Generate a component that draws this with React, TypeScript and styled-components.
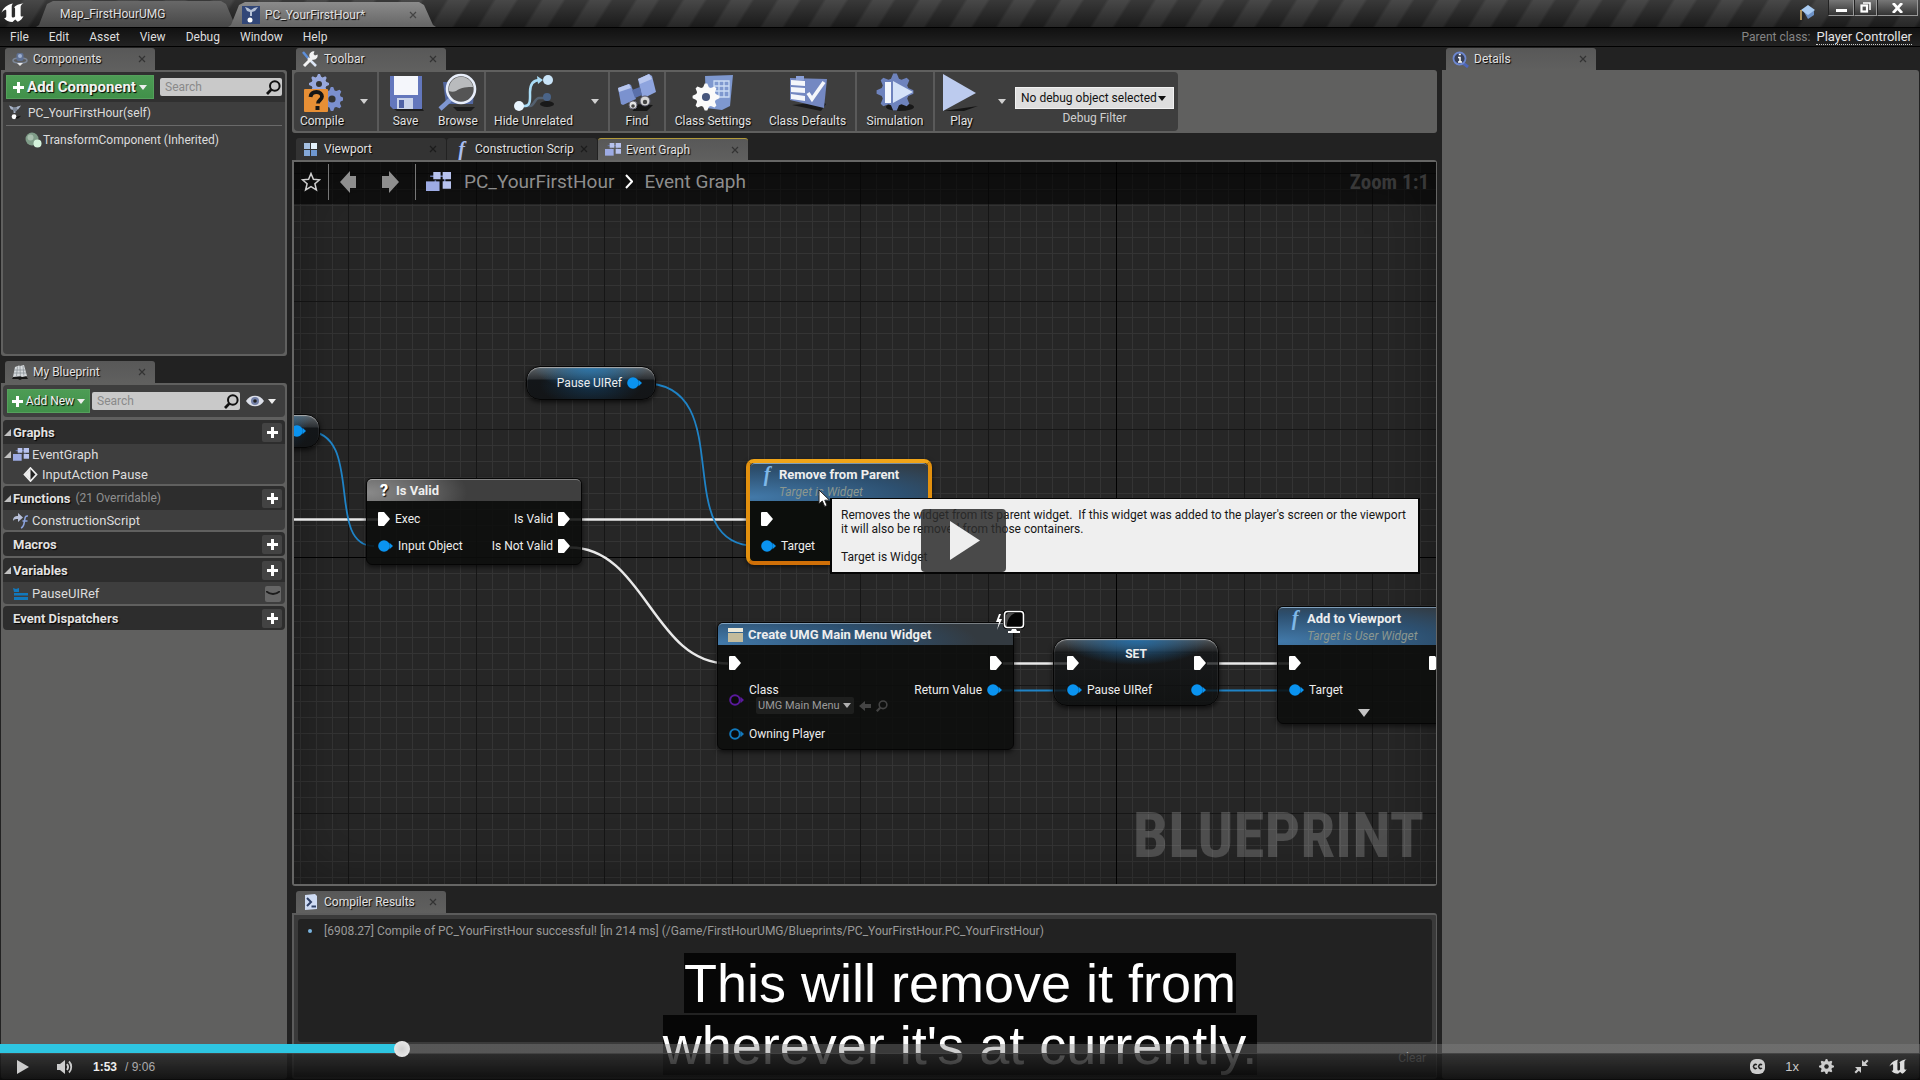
import React from "react";
import styled, { createGlobalStyle, css } from "styled-components";

const GlobalStyle = createGlobalStyle`
  *, *::before, *::after { box-sizing: border-box; }
  html, body, #root { height: 100%; }
  body { margin: 0; background: #000; font-family: Roboto, "Liberation Sans", sans-serif; font-size: 12px; color: #dcdcdc; }
  button, input, select { font: inherit; color: inherit; margin: 0; border: 0; padding: 0; background: none; }
  svg { display: block; flex: none; }
  ul { list-style: none; margin: 0; padding: 0; }
`;

const slate = "#60605f";
const dock = "#222222";
const panel = "#3e3e3e";
const textShadow = "1px 1px 1px #000";

/* ---------- page frame ---------- */
const Screen = styled.div`
  position: relative;
  display: flex;
  flex-direction: column;
  height: 100vh;
  overflow: hidden;
  background: ${dock};
`;

const TitleBar = styled.header`
  display: flex;
  height: 27px;
  flex: none;
  background:
    linear-gradient(180deg, rgba(70, 70, 70, 0.5), rgba(16, 16, 16, 0.6)),
    repeating-linear-gradient(122deg, #2b2b2b 0 18px, #4a4a4a 21px 37px, #2b2b2b 40px);
`;
const Logo = styled.div`
  width: 36px;
  padding: 3px 0 0 1px;
`;
const DocTab = styled.div<{ $active?: boolean }>`
  position: relative;
  z-index: ${(p) => (p.$active ? 1 : 0)};
  display: flex;
  align-items: center;
  gap: 5px;
  width: ${(p) => (p.$active ? 208 : 202)}px;
  height: ${(p) => (p.$active ? 25 : 26)}px;
  margin: ${(p) => (p.$active ? "2px 0 0 -10px" : "1px 0 0 0")};
  padding: 0 18px 0 ${(p) => (p.$active ? 14 : 24)}px;
  background: ${(p) =>
    p.$active ? "linear-gradient(#8b8b8b, #656565)" : "linear-gradient(#686868, #474747)"};
  clip-path: polygon(0 100%, 3px 92%, 11px 12%, 17px 0, calc(100% - 17px) 0, calc(100% - 12px) 12%, calc(100% - 3px) 92%, 100% 100%);
`;
const DocLabel = styled.button`
  flex: 1;
  text-align: left;
  color: #e0e0e0;
  text-shadow: ${textShadow};
`;
const CloseButton = styled.button`
  width: 10px;
  height: 10px;
  flex: none;
  display: grid;
  place-items: center;
`;
const WindowControls = styled.div`
  display: flex;
  align-items: flex-start;
  margin-left: auto;
  padding-right: 2px;
`;
const CapHolder = styled.div`
  padding: 4px 12px 0 0;
`;
const WindowButton = styled.button<{ $w: number }>`
  width: ${(p) => p.$w}px;
  height: 16px;
  display: grid;
  place-items: center;
  border: 1px solid #999;
  border-top: 0;
  border-left-color: #222;
  background: linear-gradient(#777, #333);
`;
const MenuBar = styled.nav`
  display: flex;
  align-items: center;
  height: 20px;
  flex: none;
  padding: 0 8px 0 10px;
  gap: 20px;
  border: 1px solid #000;
  border-width: 1px 0;
  background: linear-gradient(#111, #222);
`;
const MenuButton = styled.button`
  color: #dedede;
`;
const ParentClass = styled.div`
  display: flex;
  align-items: center;
  gap: 6px;
  margin-left: auto;
  color: #858585;
`;
const ParentLink = styled.a`
  color: #e4e4e4;
  font-size: 13px;
  text-decoration: none;
  border-bottom: 1px dotted #ccc;
  line-height: 15px;
`;

const Workspace = styled.main`
  flex: 1;
  min-height: 0;
  display: grid;
  grid-template-columns: 286px minmax(0, 1fr) 477px;
  column-gap: 5px;
  padding: 1px;
`;
const Column = styled.section`
  display: flex;
  flex-direction: column;
  min-width: 0;
  min-height: 0;
`;

/* ---------- dock tabs ---------- */
const TabStrip = styled.div<{ $gap?: number }>`
  display: flex;
  gap: 1px;
  height: 22px;
  flex: none;
  margin-top: ${(p) => p.$gap || 0}px;
  padding-left: 4px;
`;
const TabBox = styled.div<{ $dim?: boolean; $accent?: boolean }>`
  display: flex;
  align-items: center;
  width: 150px;
  padding: 0 8px 0 6px;
  border-radius: 3px 3px 0 0;
  background: ${(p) => (p.$dim ? "#333333" : "linear-gradient(#585858, #60605f)")};
  ${(p) => p.$accent && css`border-top: 1px solid #b29a3a;`}
`;
const TabLabel = styled.button`
  flex: 1;
  white-space: nowrap;
  text-align: left;
  line-height: 18px;
  color: #e2e2e2;
  text-shadow: ${textShadow};
`;
const TabIcon = styled.span`
  width: 17px;
  flex: none;
  margin-right: 5px;
  display: grid;
  place-items: center;
`;

function Cross({ c = "#333" }: { c?: string }) {
  return (
    <svg width="8" height="8" viewBox="0 0 8 8">
      <path d="M1 1l6 6M7 1l-6 6" stroke={c} strokeWidth="1.200" />
    </svg>
  );
}
function DockTab(p: { icon: React.ReactNode; label: string; dim?: boolean; accent?: boolean }) {
  return (
    <TabBox $dim={p.dim} $accent={p.accent}>
      <TabIcon>{p.icon}</TabIcon>
      <TabLabel role="tab">{p.label}</TabLabel>
      <CloseButton aria-label={`Close ${p.label}`}>
        <Cross c={p.dim ? "#1c1c1c" : "#333"} />
      </CloseButton>
    </TabBox>
  );
}

/* ---------- left column ---------- */
const Frame = styled.div<{ $h?: number }>`
  ${(p) => (p.$h ? css`height: ${p.$h}px; flex: none;` : css`flex: 1; min-height: 0;`)}
  padding: 2px;
  background: ${slate};
  border-radius: 0 3px 3px 3px;
`;
const ComponentsBox = styled.div`
  height: 100%;
  border-radius: 4px;
  overflow: hidden;
  background: ${panel};
`;
const ActionRow = styled.div<{ $box?: boolean }>`
  display: flex;
  align-items: center;
  gap: ${(p) => (p.$box ? 2 : 6)}px;
  height: ${(p) => (p.$box ? 32 : 30)}px;
  padding: 0 ${(p) => (p.$box ? 9 : 3)}px 0 ${(p) => (p.$box ? 4 : 3)}px;
  background: ${(p) => (p.$box ? panel : "#303030")};
  border-radius: ${(p) => (p.$box ? 4 : 0)}px;
`;
const GreenButton = styled.button<{ $big?: boolean }>`
  display: flex;
  align-items: center;
  justify-content: center;
  gap: 3px;
  width: ${(p) => (p.$big ? 148 : 83)}px;
  height: 24px;
  flex: none;
  color: #f2f2f2;
  font-size: ${(p) => (p.$big ? 15 : 12)}px;
  font-weight: ${(p) => (p.$big ? 700 : 400)};
  white-space: nowrap;
  text-shadow: ${textShadow};
  background: linear-gradient(#4d9c55, #41914a);
  border: 1px solid #55a05c;
`;
const SearchField = styled.label`
  display: flex;
  align-items: center;
  flex: 1;
  min-width: 0;
  height: 18px;
  padding: 0 1px 0 5px;
  border-radius: 2px;
  background: #c9c9c9;
`;
const SearchInput = styled.input`
  flex: 1;
  min-width: 0;
  outline: 0;
  color: #222;
  &::placeholder { color: #8a8a8a; opacity: 1; }
`;
const EyeButton = styled.button`
  display: flex;
  align-items: center;
  gap: 4px;
  padding-left: 4px;
`;
const SelfRow = styled.div`
  display: flex;
  align-items: center;
  gap: 6px;
  height: 24px;
  margin: 0 3px;
  padding: 0 0 2px 2px;
  border-bottom: 1px solid #6a6a6a;
`;
const ComponentRow = styled.div`
  display: flex;
  align-items: center;
  gap: 1px;
  height: 28px;
  padding-left: 22px;
`;
const BlueprintList = styled.div`
  display: flex;
  flex-direction: column;
  gap: 2px;
  margin-top: 3px;
`;
const SectionBox = styled.section`
  border-radius: 4px;
  overflow: hidden;
  background: ${panel};
`;
const SectionHead = styled.header`
  display: flex;
  align-items: center;
  height: 24px;
  padding-right: 3px;
  background: #2d2d2d;
`;
const Caret = styled.span`
  width: 10px;
  padding-left: 1px;
  flex: none;
`;
const SectionTitle = styled.h2`
  margin: 0;
  font-size: 13px;
  font-weight: 700;
  color: #e2e2e2;
  text-shadow: ${textShadow};
`;
const SectionNote = styled.span`
  margin-left: 5px;
  color: #909090;
`;
const PlusButton = styled.button`
  display: grid;
  place-items: center;
  width: 20px;
  height: 19px;
  margin-left: auto;
  border-radius: 2px;
  background: #434343;
`;
const TreeRow = styled.li<{ $indent?: boolean; $h?: number }>`
  display: flex;
  align-items: center;
  height: ${(p) => p.$h || 20}px;
  padding: 1px 4px 0 ${(p) => (p.$indent ? 20 : 0)}px;
  gap: ${(p) => (p.$indent ? 4 : 0)}px;
  font-size: 13px;
`;
const TreeIcon = styled.span`
  width: 19px;
  flex: none;
`;
const HiddenEye = styled.button`
  width: 16px;
  height: 16px;
  margin-left: auto;
  border-radius: 2px;
  background: #666;
  display: grid;
  place-items: center;
`;

/* ---------- toolbar ---------- */
const ToolFrame = styled.div`
  display: flex;
  height: 63px;
  flex: none;
  padding: 2px;
  background: ${slate};
  border-radius: 0 3px 3px 3px;
`;
const ToolBox = styled.div`
  display: flex;
  padding-right: 4px;
  background: ${panel};
  border-radius: 4px;
  overflow: hidden;
`;
const ToolGroup = styled.div`
  display: flex;
  border-right: 2px solid #5a5a5a;
  &:nth-last-of-type(2) { border-right: 0; }
`;
const ToolButton = styled.button<{ $w: number }>`
  display: flex;
  flex-direction: column;
  align-items: center;
  width: ${(p) => p.$w}px;
  padding-top: 1px;
  gap: 1px;
  white-space: nowrap;
  color: #e2e2e2;
  text-shadow: ${textShadow};
`;
const DropButton = styled.button`
  width: 27px;
  display: grid;
  place-items: center;
`;
const DebugBox = styled.div`
  display: flex;
  flex-direction: column;
  align-items: center;
  padding-top: 15px;
`;
const SelectWrap = styled.div`
  display: grid;
  width: 159px;
  height: 22px;
  align-items: center;
  background: #dedede;
  border: 1px solid #f2f2f2;
  & > * { grid-area: 1 / 1; }
  & > svg { justify-self: end; margin-right: 7px; pointer-events: none; }
`;
const DebugSelect = styled.select`
  appearance: none;
  width: 100%;
  padding-left: 5px;
  color: #111;
`;
const DebugLabel = styled.label`
  color: #d0d0d0;
  line-height: 19px;
`;

/* ---------- graph ---------- */
const GraphFrame = styled.div`
  flex: 1;
  min-height: 0;
  border: 2px solid #666665;
  border-right-width: 1px;
  border-radius: 0 3px 3px 3px;
`;
const Canvas = styled.div`
  position: relative;
  height: 100%;
  overflow: hidden;
  background-color: #262626;
  background-image:
    linear-gradient(#000, #000), linear-gradient(#000, #000),
    linear-gradient(90deg, #161616 1px, transparent 1px), linear-gradient(#161616 1px, transparent 1px),
    linear-gradient(90deg, #343434 1px, transparent 1px), linear-gradient(#343434 1px, transparent 1px);
  background-size: 1px 100%, 100% 1px, 128px 128px, 128px 128px, 16px 16px, 16px 16px;
  background-position: 822px 0, 0 395px, 54px 0, 0 11px, 6px 0, 0 11px;
  background-repeat: no-repeat, no-repeat, repeat, repeat, repeat, repeat;
`;
const Vignette = styled.div`
  position: absolute;
  inset: 0;
  box-shadow: inset 0 0 60px rgba(0, 0, 0, 0.35);
  pointer-events: none;
`;
const Wires = styled.svg`
  position: absolute;
  inset: 0;
  fill: none;
`;
const Crumbs = styled.div`
  position: absolute;
  inset: 0 0 auto 0;
  display: flex;
  align-items: center;
  height: 42px;
  padding: 0 7px 3px;
  font-size: 19px;
  color: #8d8d8d;
  background: rgba(0, 0, 0, 0.58);
`;
const CrumbIcon = styled.button<{ $w: number; $line?: boolean }>`
  display: grid;
  place-items: center start;
  width: ${(p) => p.$w}px;
  height: 36px;
  border-right: ${(p) => (p.$line ? "1px solid #777" : "0")};
`;
const CrumbGlyph = styled.span`
  padding: 0 13px 0 10px;
`;
const Chevron = styled.span`
  padding: 0 11px;
`;
const ZoomText = styled.span`
  margin-left: auto;
  font-family: "Roboto Condensed", "Liberation Sans Narrow", Roboto, sans-serif;
  font-size: 21px;
  line-height: 34px;
  font-weight: 700;
  color: #383838;
`;
const Watermark = styled.div`
  position: absolute;
  right: 12px;
  bottom: 10px;
  font: 700 63px/76px "Roboto Condensed", "Liberation Sans Narrow", Roboto, sans-serif;
  color: rgba(255, 255, 255, 0.19);
`;

const Node = styled.article<{ $x: number; $y: number; $w: number; $h: number; $kind?: "var" | "set" }>`
  position: absolute;
  left: ${(p) => p.$x}px;
  top: ${(p) => p.$y}px;
  width: ${(p) => p.$w}px;
  height: ${(p) => p.$h}px;
  border: 1px solid #050505;
  border-radius: ${(p) => (p.$kind ? 14 : 6)}px;
  color: #ededed;
  white-space: nowrap;
  background: rgba(12, 14, 12, 0.88);
  box-shadow: 0 2px 5px rgba(0, 0, 0, 0.6);
  ${(p) =>
    p.$kind === "var" &&
    css`
      background:
        radial-gradient(ellipse 45% 70% at 50% 0, rgba(42, 120, 175, 0.95), rgba(42, 120, 175, 0)),
        radial-gradient(ellipse 40% 70% at 50% 55%, rgba(20, 70, 110, 0.6), rgba(20, 60, 90, 0)),
        linear-gradient(#5f6468 0, #2c3034 12px, #131619 13px, #131517 100%);
      box-shadow: inset 0 1px 1px #aaa, 0 2px 5px rgba(0, 0, 0, 0.7);
    `}
  ${(p) =>
    p.$kind === "set" &&
    css`
      background:
        radial-gradient(ellipse 45% 26px at 50% 0, rgba(34, 110, 170, 0.95), rgba(34, 110, 170, 0)),
        linear-gradient(rgba(85, 90, 94, 0.9) 0, rgba(34, 36, 38, 0.8) 12px, rgba(18, 20, 22, 0.75) 13px, rgba(12, 14, 14, 0.8) 100%);
      box-shadow: inset 0 1px 1px #aaa, 0 2px 5px rgba(0, 0, 0, 0.7);
    `}
`;
const Selected = styled(Node)`
  border: 4px solid #e8980f;
  border-color: #f0a418 #e2900e #cf6f08;
  border-radius: 8px;
  background: #0c0e0c;
`;
const NodeHead = styled.header<{ $tone?: "grey" | "blue"; $tall?: boolean }>`
  display: flex;
  align-items: ${(p) => (p.$tall ? "flex-start" : "center")};
  height: ${(p) => (p.$tall ? 38 : 22)}px;
  padding-left: 10px;
  gap: 5px;
  border-radius: 5px 5px 0 0;
  border-top: 1px solid rgba(255, 255, 255, 0.35);
  background: ${(p) =>
    p.$tone === "grey"
      ? "radial-gradient(ellipse 100px 40px at 0 60%, #8a8a8a, #5b5b5b 70%, #3f3f3f 100%)"
      : "radial-gradient(ellipse 260px 44px at 0 90%, #4279a9, #2d5070 60%, #333a40 100%)"};
`;
const NodeTitle = styled.h3<{ $center?: boolean }>`
  margin: 0;
  font-size: ${(p) => (p.$center ? 12 : 13)}px;
  line-height: 16px;
  font-weight: 700;
  color: #eeeeee;
  ${(p) => p.$center && css`text-align: center; height: 12px; line-height: 30px;`}
`;
const NodeTitles = styled.div`
  padding-top: 3px;
`;
const NodeSub = styled.p`
  margin: 0;
  font-style: italic;
  line-height: 18px;
  color: #8b978f;
`;
const NodeBody = styled.div<{ $wide?: boolean }>`
  padding: 4px ${(p) => (p.$wide ? 12 : 11)}px 0 ${(p) => (p.$wide ? 13 : 11)}px;
`;
const PinRow = styled.div<{ $h?: number }>`
  display: flex;
  justify-content: space-between;
  height: ${(p) => p.$h || 27}px;
`;
const Pin = styled.div<{ $h?: number }>`
  display: flex;
  align-items: center;
  height: ${(p) => p.$h || 28}px;
  gap: 5px;
`;
const VarBody = styled.div`
  display: flex;
  align-items: center;
  justify-content: flex-end;
  gap: 5px;
  height: 100%;
  padding-right: 13px;
`;
const ClassStack = styled.div`
  display: flex;
  flex-direction: column;
  padding-bottom: 3px;
  line-height: 14px;
`;
const ClassPick = styled.div`
  display: flex;
  align-items: center;
  gap: 5px;
  padding-left: 7px;
`;
const ClassButton = styled.button`
  display: flex;
  align-items: center;
  gap: 3px;
  height: 17px;
  padding: 0 3px 0 2px;
  border-radius: 2px;
  font-size: 11px;
  color: #9a9a9a;
  background: #1e1f1e;
`;
const FGlyph = styled.span<{ $c?: string }>`
  width: 14px;
  flex: none;
  text-align: center;
  font: italic 700 20px/20px "Liberation Serif", serif;
  color: ${(p) => p.$c || "#7fb8e8"};
`;
const QGlyph = styled.span`
  width: 14px;
  text-align: center;
  font: 900 16px/18px Roboto, sans-serif;
  color: #fff;
  text-shadow: ${textShadow};
`;
const Badge = styled.div`
  position: absolute;
  right: -12px;
  top: -14px;
`;
const Expand = styled.button`
  position: absolute;
  left: 80px;
  bottom: 6px;
`;
const Tooltip = styled.div`
  position: absolute;
  left: 536px;
  top: 336px;
  height: 76px;
  padding: 9px 12px 0 9px;
  border: 2px solid #050505;
  border-top-width: 1px;
  white-space: pre;
  line-height: 14px;
  color: #161616;
  background: #efefef;
`;
const Cursor = styled.svg`
  position: absolute;
  left: 524px;
  top: 327px;
`;

/* ---------- compiler results ---------- */
const ResultsFrame = styled.div`
  display: flex;
  flex-direction: column;
  height: 166px;
  flex: none;
  padding: 4px;
  background: #3a3a3a;
  border: 2px solid #5c5c5c;
  border-right-width: 1px;
  border-radius: 0 3px 3px 3px;
`;
const ResultLog = styled.div`
  display: flex;
  height: 123px;
  padding: 3px 10px;
  gap: 12px;
  line-height: 18px;
  border-radius: 3px;
  color: #9a9a9a;
  background: ${dock};
`;
const Dot = styled.span`
  width: 4px;
  height: 4px;
  margin-top: 7px;
  border-radius: 50%;
  background: #7ab4e0;
`;
const ClearButton = styled.button`
  align-self: flex-end;
  margin: 9px 6px 0 0;
  color: #ccc;
`;

/* ---------- player ---------- */
const CaptionLayer = styled.div`
  position: absolute;
  inset: auto 0 4px 0;
  text-align: center;
  font: 54px/62px "Liberation Sans", Arial, sans-serif;
  color: #fff;
`;
const CaptionText = styled.span`
  background: rgba(0, 0, 0, 0.82);
`;
const BigPlay = styled.button`
  position: absolute;
  left: calc(50% - 39px);
  top: calc(50% - 31px);
  width: 85px;
  height: 63px;
  display: grid;
  place-items: center;
  padding-left: 3px;
  border-radius: 4px;
  background: rgba(43, 43, 43, 0.85);
`;
const PlayerBar = styled.footer`
  position: absolute;
  inset: auto 0 0 0;
`;
const Seek = styled.input`
  appearance: none;
  display: block;
  width: 100%;
  height: 9px;
  outline: 0;
  background: linear-gradient(90deg, #2ec6e2 21%, rgba(130, 130, 130, 0.4) 21%);
  &::-webkit-slider-thumb {
    appearance: none;
    width: 16px;
    height: 16px;
    border-radius: 50%;
    background: radial-gradient(#cfcfcf, #f2f2f2);
  }
`;
const Controls = styled.div`
  display: flex;
  align-items: center;
  height: 27px;
  padding: 0 13px 1px 17px;
  border-top: 1px solid rgba(120, 120, 120, 0.5);
  color: #c8c8c8;
  background: linear-gradient(rgba(40, 40, 40, 0.8), rgba(8, 8, 8, 0.88));
  font-family: "Liberation Sans", Arial, sans-serif;
`;
const ControlButton = styled.button<{ $w: number }>`
  width: ${(p) => p.$w}px;
`;
const Time = styled.span`
  display: flex;
  gap: 8px;
  color: #aaa;
`;
const Now = styled.strong`
  color: #eee;
`;
const RightControls = styled.div`
  display: flex;
  align-items: center;
  gap: 20px;
  margin-left: auto;
`;
const SpeedButton = styled.button`
  font-size: 13px;
`;

/* ---------- icons ---------- */
const Tri = ({ c = "#eee" }: { c?: string }) => (
  <svg width="8" height="5" viewBox="0 0 8 5">
    <path d="M0 0h8L4 5z" fill={c} />
  </svg>
);
const Corner = () => (
  <svg width="7" height="7" viewBox="0 0 7 7"><path d="M7 0v7H0z" fill="#c0c0c0" /></svg>
);
const Plus = () => (
  <svg width="11" height="11" viewBox="0 0 11 11"><path d="M4 0h3v4h4v3H7v4H4V7H0V4h4z" fill="#fff" /></svg>
);
const Lens = ({ c = "#111", s = 15 }: { c?: string; s?: number }) => (
  <svg width={s} height={s} viewBox="0 0 15 15" fill="none" stroke={c}>
    <circle cx="8.800" cy="6" r="4.800" strokeWidth="2" />
    <path d="M5.200 9.600L1 14" strokeWidth="2.800" />
  </svg>
);
const UELogo = ({ s = 23, c = "#fff" }: { s?: number; c?: string }) => (
  <svg width={s} height={(s * 20) / 24} viewBox="0 0 24 20">
    <path d="M.5 10C2.500 5 6 2 12.500.5c-1 1-1.300 2-1.300 3.500v9.500c0 1.200.6 1.700 1.500 1.700.8 0 1.500-.4 2-1.200V6c0-1-.5-1.400-1.300-1.200C15.500 2.500 18.500 1 23.500.3c-2 1-3 2.300-3 4v8.500c0 1 .4 1.400 1.100 1.400.6 0 1.200-.4 1.900-1-1 3-3.200 5-6 6.300l-2.700-2.200-2.800 2.500c-3.900 0-7-1.500-8.800-4.100 1.500.2 2.300-.5 2.300-1.800V8.300c0-1.200-.7-1.600-1.600-1.100C2.700 7.700 1.600 8.700.5 10z" fill={c} />
  </svg>
);
const Actor = () => (
  <svg width="14" height="17" viewBox="0 0 15 17">
    <path d="M1 1l3 1 3 2 3-2 4-1-3 4-3 1v3H6V6L3 5z" fill="#a9b4c8" />
    <circle cx="7.500" cy="5" r="2.500" fill="#7d8797" />
    <circle cx="6.500" cy="13" r="2.600" fill="#fff" />
    <path d="M9 13l5-1-3 3H8z" fill="#151515" />
  </svg>
);
const ComponentsIcon = () => (
  <svg width="16" height="16" viewBox="0 0 16 16">
    <ellipse cx="8" cy="9.500" rx="7" ry="2.500" fill="none" stroke="#7c8798" strokeWidth="1.500" />
    <rect x="4.500" y="2" width="7" height="8" rx="2" fill="#5f7194" />
    <circle cx="8" cy="5" r="2" fill="#9fb0d0" />
    <path d="M5 12l3 3 3-3z" fill="#e8e8e8" />
  </svg>
);
const BookIcon = () => (
  <svg width="16" height="16" viewBox="0 0 16 16">
    <path d="M0 15l2-3h12l2 3-6 0-2 1-2-1z" fill="#151515" />
    <path d="M3 3L7 1.500l1 .5 4-1 3 11-5 1-1.500-.7L1 13z" fill="#d5d9dc" />
    <path d="M5.500 2.500L4.500 12M8 2l.3 10M11 2l.9 9.500M2 6h11M2 9h12" stroke="#858c92" strokeWidth=".7" />
  </svg>
);
const WrenchIcon = () => (
  <svg width="17" height="17" viewBox="0 0 17 17">
    <path d="M1 1l5 6" stroke="#5d8fdb" strokeWidth="2.500" />
    <path d="M6 7l8 8" stroke="#dce6f5" strokeWidth="2.500" />
    <path d="M2 15l9-9" stroke="#f4f4f4" strokeWidth="3" />
    <path d="M15.500 3.500l-2.500 1-1.500-1.500 1-2.500a4.200 4.200 0 1 0 3 3z" fill="#f4f4f4" />
  </svg>
);
const ViewportIcon = () => (
  <svg width="15" height="15" viewBox="0 0 15 15">
    <path d="M1 1h6v6H1z" fill="#a5c0e2" /><path d="M8 1h6v6H8z" fill="#e3f1fb" />
    <path d="M1 8h6v6H1z" fill="#83a7d8" /><path d="M8 8h6v6H8z" fill="#6f97cf" />
  </svg>
);
const GraphIcon = ({ s = 16 }: { s?: number }) => (
  <svg width={s} height={(s * 19) / 24} viewBox="0 0 24 19">
    <path d="M4 4h18M18 3v12M9 8v8" stroke="#6776ab" strokeWidth="1.500" />
    <path d="M7 0h7v7H7zM16 0h8v7h-8zM16 9h8v7h-8z" fill="#b7c2ee" />
    <path d="M0 9h13v10H0z" fill="#9dabe4" />
  </svg>
);
const InfoLens = () => (
  <svg width="17" height="17" viewBox="0 0 17 17">
    <path d="M11 12l5 4" stroke="#4e66b8" strokeWidth="3" />
    <circle cx="7.500" cy="7.500" r="6" fill="#394157" stroke="#6d87cf" strokeWidth="1.800" />
    <path d="M6.800 3.500h2M6 6.500h2v4M6 11h4" stroke="#fff" strokeWidth="1.500" fill="none" />
  </svg>
);
const ConsoleIcon = () => (
  <svg width="14" height="16" viewBox="0 0 14 16">
    <path d="M1 1l10-1 2 2v13l-12 1z" fill="#cfdcf4" />
    <path d="M3 4l4 4-4 4M7.500 12.500H12" fill="none" stroke="#2f4066" strokeWidth="2" />
  </svg>
);
const gearPath = (cx: number, cy: number, r: number, n = 8) => {
  const pts: string[] = [];
  for (let i = 0; i < n * 4; i++) {
    const a = ((i - 0.5) / (n * 4)) * Math.PI * 2;
    const rr = i % 4 < 2 ? r : r * 0.75;
    pts.push(`${(cx + Math.cos(a) * rr).toFixed(1)} ${(cy + Math.sin(a) * rr).toFixed(1)}`);
  }
  return `M${pts.join("L")}z`;
};
const Gear = (p: { x: number; y: number; r: number; c: string; hole: string; n?: number }) => (
  <g><path d={gearPath(p.x, p.y, p.r, p.n)} fill={p.c} /><circle cx={p.x} cy={p.y} r={p.r * 0.3} fill={p.hole} /></g>
);
const Big = ({ children }: { children: React.ReactNode }) => (
  <svg width="42" height="40" viewBox="0 0 42 40">{children}</svg>
);
const CompileIcon = () => (
  <Big>
    <Gear x={18} y={11} r={10} c="#98a8dc" hole="#333" />
    <Gear x={31} y={26} r={12} c="#7b8fce" hole="#333" />
    <rect x="3" y="16" width="24" height="23" rx="1" fill="#e78f35" />
    <path d="M9.500 24c.5-4 3-5 6-5 3.500 0 5.500 2 5.500 4.500 0 3.500-4 3.500-4 7" fill="none" stroke="#161616" strokeWidth="3.800" />
    <rect x="14.500" y="33" width="4" height="4" fill="#161616" />
  </Big>
);
const SaveIcon = () => (
  <Big>
    <path d="M9 36l28-1 2 3H12z" fill="#1c1c1c" />
    <path d="M5 3h32v33H8l-3-3z" fill="#6377bd" />
    <path d="M9 3h24v19H9z" fill="#f4f6fb" />
    <path d="M12 25h16v11H12z" fill="#c9d3ea" /><path d="M14 27h5v8h-5z" fill="#4f62a5" />
  </Big>
);
const BrowseIcon = () => (
  <Big>
    <path d="M6 9h32l-2 22H9z" fill="#53679f" /><path d="M16 34h22l-4 4H20z" fill="#1c1c1c" />
    <path d="M14 26L3 36" stroke="#7f97d2" strokeWidth="4.500" />
    <circle cx="24" cy="16" r="14" fill="#555" stroke="#e8eefa" strokeWidth="2.600" />
    <path d="M12 18a12 12 0 0 1 24-4c-5 0-12 0-17 4-2 1-5 1-7 0z" fill="#b9bbbd" />
  </Big>
);
const HideIcon = () => (
  <Big>
    <path d="M7 33h10c4 0 5-8 9-8h6" fill="none" stroke="#53606f" strokeWidth="2.500" />
    <ellipse cx="34" cy="31" rx="7" ry="3" fill="#191919" />
    <circle cx="34" cy="24" r="4" fill="#4a6488" />
    <path d="M7 33h5c6 0 5-8 5-14s2-12 10-12" fill="none" stroke="#a9dcf6" strokeWidth="2.500" />
    <path d="M24 3l6 4-5 4z" fill="#a9dcf6" />
    <circle cx="6" cy="33" r="5" fill="#e8f4fd" /><circle cx="35" cy="7" r="5" fill="#c9e4f8" />
  </Big>
);
const FindIcon = () => (
  <Big>
    <path d="M15 31l22 1-6 6-14 0z" fill="#161616" />
    <path d="M2 15l11-4 2 1 5 14-13 6-2-1z" fill="#7b92cf" /><path d="M22 6l11-5 3 2 4 16-12 6-2-1z" fill="#8ea4de" />
    <path d="M2 15l11-4 2 4-12 4zM22 6l11-5 3 5-12 5z" fill="#b7c6ee" />
    <path d="M16 17l8-3 2 8-7 3z" fill="#5a70ab" />
    <circle cx="17" cy="32" r="4" fill="#e4e4e4" stroke="#667" /><circle cx="17" cy="33" r="1.800" fill="#444" />
    <circle cx="29" cy="28" r="5" fill="#d6d6d6" stroke="#556" /><circle cx="29" cy="29" r="2.200" fill="#444" />
  </Big>
);
const SettingsIcon = () => (
  <Big>
    <path d="M13 3l28-1-3 31-8 4-16-2z" fill="#7e98cf" />
    <path d="M22 8h15v16H22zM27 8v16M32 8v16M22 13h15M22 18h15" fill="none" stroke="#cbdcf5" strokeWidth="1.300" />
    <Gear x={14} y={24} r={13.5} c="#fafafa" hole="#46557c" />
  </Big>
);
const DefaultsIcon = () => (
  <Big>
    <path d="M5 32l30-3 4 2-5 7z" fill="#1a1a1a" />
    <path d="M3 5l37 1-3 29L3 27z" fill="#7488c2" /><path d="M9 3h8v4H9z" fill="#8ba0d8" />
    <path d="M4 7l14 1v5L4 12zM4 14l14 1v5L4 19zM4 21l14 2v5L4 26z" fill="#f4f6fb" />
    <path d="M21 20l4 6 12-17" fill="none" stroke="#f4f6fb" strokeWidth="3.600" />
  </Big>
);
const SimIcon = () => (
  <Big>
    <ellipse cx="26" cy="34" rx="14" ry="4" fill="#181818" />
    <Gear x={21} y={19} r={18.5} c="#6e83bd" hole="#6e83bd" />
    <path d="M11 9h6v21h-6z" fill="#f2f6fd" /><path d="M19 8l20 11-20 11z" fill="#d4e2f8" />
  </Big>
);
const PlayIcon = () => (
  <Big>
    <path d="M2 38l35-5-14 5z" fill="#141414" /><path d="M2 1l33 19L2 38z" fill="#bccbee" />
  </Big>
);

const Exec = () => (
  <svg width="12" height="14" viewBox="0 0 12 14"><path d="M1 0h5l6 7-6 7H1a1 1 0 0 1-1-1V1a1 1 0 0 1 1-1z" fill="#fff" /></svg>
);
const Data = ({ c = "#0a93f0", open }: { c?: string; open?: boolean }) => (
  <svg width="15" height="12" viewBox="0 0 15 12">
    <path d="M11.500 2.800L15 6l-3.500 3.200z" fill={c} />
    <circle cx="6" cy="6" r={open ? 4.8 : 5.8} fill={open ? "#0a0a0a" : c} stroke={c} strokeWidth={open ? 2 : 0} />
  </svg>
);

const toolGroups: { label: string; w: number; icon: React.ReactNode }[][] = [
  [{ label: "Compile", w: 56, icon: <CompileIcon /> }],
  [{ label: "Save", w: 53, icon: <SaveIcon /> }, { label: "Browse", w: 52, icon: <BrowseIcon /> }],
  [{ label: "Hide Unrelated", w: 95, icon: <HideIcon /> }],
  [{ label: "Find", w: 54, icon: <FindIcon /> }],
  [{ label: "Class Settings", w: 94, icon: <SettingsIcon /> }, { label: "Class Defaults", w: 95, icon: <DefaultsIcon /> }],
  [{ label: "Simulation", w: 76, icon: <SimIcon /> }],
  [{ label: "Play", w: 53, icon: <PlayIcon /> }],
];
const withMenu = ["Compile", "Hide Unrelated", "Play"];

function Section(p: { title: string; note?: string; open?: boolean; children?: React.ReactNode }) {
  return (
    <SectionBox>
      <SectionHead>
        <Caret>{p.open && <Corner />}</Caret>
        <SectionTitle>{p.title}</SectionTitle>
        {p.note && <SectionNote>{p.note}</SectionNote>}
        <PlusButton aria-label={`Add to ${p.title}`}><Plus /></PlusButton>
      </SectionHead>
      {p.children && <ul>{p.children}</ul>}
    </SectionBox>
  );
}

function LeftColumn() {
  return (
    <Column>
      <TabStrip><DockTab icon={<ComponentsIcon />} label="Components" /></TabStrip>
      <Frame $h={286}>
        <ComponentsBox>
          <ActionRow>
            <GreenButton $big><Plus />Add Component<Tri /></GreenButton>
            <SearchField>
              <SearchInput placeholder="Search" aria-label="Search components" /><Lens />
            </SearchField>
          </ActionRow>
          <SelfRow><Actor />PC_YourFirstHour(self)</SelfRow>
          <ComponentRow>
            <svg width="17" height="16" viewBox="0 0 17 16">
              <circle cx="7" cy="7" r="6.500" fill="#7f9c88" /><circle cx="5.500" cy="5.500" r="3" fill="#a8bfae" />
              <circle cx="12.500" cy="11.500" r="4" fill="#d5f3dc" />
            </svg>
            TransformComponent (Inherited)
          </ComponentRow>
        </ComponentsBox>
      </Frame>
      <TabStrip $gap={5}><DockTab icon={<BookIcon />} label="My Blueprint" /></TabStrip>
      <Frame>
        <ActionRow $box>
          <GreenButton><Plus />Add New<Tri /></GreenButton>
          <SearchField>
            <SearchInput placeholder="Search" aria-label="Search blueprint" /><Lens />
          </SearchField>
          <EyeButton aria-label="View options">
            <svg width="18" height="12" viewBox="0 0 18 12">
              <path d="M0 6c4-7 14-7 18 0-4 7-14 7-18 0z" fill="#dcdfe8" />
              <circle cx="9" cy="6" r="4" fill="#7481a8" /><circle cx="9" cy="6" r="1.800" fill="#222" />
            </svg>
            <Tri />
          </EyeButton>
        </ActionRow>
        <BlueprintList>
          <Section title="Graphs" open>
            <TreeRow><Caret><Corner /></Caret><TreeIcon><GraphIcon /></TreeIcon>EventGraph</TreeRow>
            <TreeRow $indent>
              <svg width="15" height="15" viewBox="0 0 15 15">
                <path d="M7.500 1l6 6.500-6 6.500-6-6.500z" fill="#222" stroke="#eee" strokeWidth="1.800" />
                <path d="M7.500 2v11L2 7.500z" fill="#eee" />
              </svg>
              InputAction Pause
            </TreeRow>
          </Section>
          <Section title="Functions" note="(21 Overridable)" open>
            <TreeRow>
              <Caret />
              <TreeIcon>
                <svg width="17" height="16" viewBox="0 0 17 16">
                  <path d="M0 8c0-4 2-5 5-5V0l5 4.500L5 9V6C3 6 1 6 0 8z" fill="#b8c0d8" />
                  <path d="M15 3c-3-.5-3 2-3.500 5S11 14 8 15M9.500 8h5" fill="none" stroke="#8ba2dc" strokeWidth="1.600" />
                </svg>
              </TreeIcon>
              ConstructionScript
            </TreeRow>
          </Section>
          <Section title="Macros" />
          <Section title="Variables" open>
            <TreeRow $h={22}>
              <Caret />
              <TreeIcon>
                <svg width="16" height="13" viewBox="0 0 16 13">
                  <path d="M0 1l3 1 3-1v4H1zM1 6h14v2.500H1zM1 10h14v3H1z" fill="#1279bd" />
                </svg>
              </TreeIcon>
              PauseUIRef
              <HiddenEye aria-label="Toggle PauseUIRef visibility">
                <svg width="14" height="5" viewBox="0 0 14 5"><path d="M0 0c4 4 10 4 14 0" fill="none" stroke="#1c1c1c" strokeWidth="1.800" /></svg>
              </HiddenEye>
            </TreeRow>
          </Section>
          <Section title="Event Dispatchers" />
        </BlueprintList>
      </Frame>
    </Column>
  );
}

function Graph() {
  return (
    <Canvas>
      <Vignette />
      <Wires width="100%" height="100%">
        <g stroke="#e9e9e9" strokeWidth="2.500">
          <path d="M0 357.500H84M276 357.500H464M276 385.500C351 385.500 359 501.500 434 501.500M709 501.500H774M913 501.500H996" />
        </g>
        <g stroke="#1f83c6" strokeWidth="1.800">
          <path d="M12 269C72 269 30 384 80 384M348 221C448 221 372 384 462 384M707 528.500H772M910 528.500H996" />
        </g>
      </Wires>

      <Node $x={-81} $y={252} $w={107} $h={34} $kind="var"><VarBody><Data /></VarBody></Node>
      <Node $x={232} $y={204} $w={130} $h={34} $kind="var"><VarBody>Pause UIRef<Data /></VarBody></Node>

      <Node $x={72} $y={316} $w={216} $h={87}>
        <NodeHead $tone="grey"><QGlyph>?</QGlyph><NodeTitle>Is Valid</NodeTitle></NodeHead>
        <NodeBody>
          <PinRow><Pin><Exec />Exec</Pin><Pin>Is Valid<Exec /></Pin></PinRow>
          <PinRow><Pin><Data />Input Object</Pin><Pin>Is Not Valid<Exec /></Pin></PinRow>
        </NodeBody>
      </Node>

      <Selected $x={452} $y={297} $w={186} $h={106}>
        <NodeHead $tall>
          <FGlyph>f</FGlyph>
          <NodeTitles><NodeTitle>Remove from Parent</NodeTitle><NodeSub>Target is Widget</NodeSub></NodeTitles>
        </NodeHead>
        <NodeBody>
          <PinRow><Pin><Exec /></Pin></PinRow>
          <PinRow><Pin><Data />Target</Pin></PinRow>
        </NodeBody>
      </Selected>

      <Node $x={423} $y={460} $w={297} $h={128}>
        <NodeHead>
          <svg width="15" height="14" viewBox="0 0 15 14">
            <path d="M0 0h15v4H0z" fill="#ece8d8" /><path d="M0 5h15v9H0z" fill="#c3bb9c" />
          </svg>
          <NodeTitle>Create UMG Main Menu Widget</NodeTitle>
        </NodeHead>
        <NodeBody>
          <PinRow><Pin><Exec /></Pin><Pin><Exec /></Pin></PinRow>
          <PinRow $h={44}>
            <Pin $h={48}>
              <Data c="#5a1a9c" open />
              <ClassStack>
                Class
                <ClassPick>
                  <ClassButton>UMG Main Menu<Tri c="#b0b0b0" /></ClassButton>
                  <svg width="12" height="10" viewBox="0 0 12 10"><path d="M0 5l6-5v3h6v4H6v3z" fill="#444" /></svg>
                  <Lens c="#444" s={12} />
                </ClassPick>
              </ClassStack>
            </Pin>
            <Pin>Return Value<Data /></Pin>
          </PinRow>
          <PinRow><Pin><Data c="#1279bd" open />Owning Player</Pin></PinRow>
        </NodeBody>
        <Badge>
          <svg width="30" height="25" viewBox="0 0 30 25">
            <path d="M4 5L1 13h3l-2 8 5-11H4l2-5z" fill="#fff" />
            <rect x="8" y="1" width="22" height="19" rx="4" fill="#000" />
            <rect x="9.500" y="2.500" width="19" height="16" rx="3" fill="#050505" stroke="#fff" strokeWidth="1.600" />
            <path d="M12 17c0-6 3-11 8-13h-7l-2 2v11z" fill="#4c4c4c" />
            <path d="M17 20h4l1 2h3v2H13v-2h3z" fill="#fff" />
          </svg>
        </Badge>
      </Node>

      <Node $x={759} $y={476} $w={166} $h={68} $kind="set">
        <NodeTitle $center>SET</NodeTitle>
        <NodeBody $wide>
          <PinRow><Pin $h={16}><Exec /></Pin><Pin $h={16}><Exec /></Pin></PinRow>
          <PinRow><Pin $h={16}><Data />Pause UIRef</Pin><Pin $h={16}><Data /></Pin></PinRow>
        </NodeBody>
      </Node>

      <Node $x={983} $y={444} $w={176} $h={118}>
        <NodeHead $tall>
          <FGlyph>f</FGlyph>
          <NodeTitles><NodeTitle>Add to Viewport</NodeTitle><NodeSub>Target is User Widget</NodeSub></NodeTitles>
        </NodeHead>
        <NodeBody>
          <PinRow><Pin><Exec /></Pin><Pin><Exec /></Pin></PinRow>
          <PinRow><Pin><Data />Target</Pin></PinRow>
        </NodeBody>
        <Expand aria-label="Show advanced pins">
          <svg width="12" height="8" viewBox="0 0 12 8"><path d="M0 0h12L6 8z" fill="#c4c4c4" /></svg>
        </Expand>
      </Node>

      <Crumbs>
        <CrumbIcon $w={28} $line aria-label="Favourite">
          <svg width="20" height="20" viewBox="0 0 20 20">
            <path d="M10 1.500l2.400 5.800 6.200.5-4.700 4 1.500 6.200L10 14.700 4.600 18l1.500-6.200-4.700-4 6.200-.5z" fill="none" stroke="#d0d0d0" strokeWidth="1.500" />
          </svg>
        </CrumbIcon>
        <CrumbIcon $w={53} aria-label="Back">
          <svg width="28" height="22" viewBox="0 0 28 22"><path d="M11 11L21 0v5h6v12h-6v5z" fill="#8f8f8f" /></svg>
        </CrumbIcon>
        <CrumbIcon $w={34} $line aria-label="Forward">
          <svg width="18" height="22" viewBox="0 0 18 22"><path d="M17 11L7 0v5H0v12h7v5z" fill="#8f8f8f" /></svg>
        </CrumbIcon>
        <CrumbGlyph><GraphIcon s={25} /></CrumbGlyph>
        PC_YourFirstHour
        <Chevron><svg width="8" height="15" viewBox="0 0 8 15"><path d="M1 1l6 6.500L1 14" fill="none" stroke="#fff" strokeWidth="2" /></svg></Chevron>
        Event Graph
        <ZoomText>Zoom 1:1</ZoomText>
      </Crumbs>
      <Watermark>BLUEPRINT</Watermark>
      <Tooltip role="tooltip">
        {"Removes the widget from its parent widget.  If this widget was added to the player's screen or the viewport\nit will also be removed from those containers.\n\nTarget is Widget"}
      </Tooltip>
      <Cursor width="13" height="19" viewBox="0 0 13 19">
        <path d="M1 1v14l3.300-3 2.400 5.500 2.400-1-2.300-5.300H11.500z" fill="#fff" stroke="#222" />
      </Cursor>
    </Canvas>
  );
}

function CenterColumn() {
  return (
    <Column>
      <TabStrip><DockTab icon={<WrenchIcon />} label="Toolbar" /></TabStrip>
      <ToolFrame>
        <ToolBox>
          {toolGroups.map((g) => (
            <ToolGroup key={g[0].label}>
              {g.map((t) => <ToolButton key={t.label} $w={t.w}>{t.icon}{t.label}</ToolButton>)}
              {withMenu.includes(g[0].label) && (
                <DropButton aria-label={`${g[0].label} options`}><Tri c="#d0d0d0" /></DropButton>
              )}
            </ToolGroup>
          ))}
          <DebugBox>
            <SelectWrap>
              <DebugSelect id="debug"><option>No debug object selected</option></DebugSelect>
              <Tri c="#111" />
            </SelectWrap>
            <DebugLabel htmlFor="debug">Debug Filter</DebugLabel>
          </DebugBox>
        </ToolBox>
      </ToolFrame>
      <TabStrip $gap={5}>
        <DockTab dim icon={<ViewportIcon />} label="Viewport" />
        <DockTab dim icon={<FGlyph $c="#a9bdf0">f</FGlyph>} label="Construction Scrip" />
        <DockTab accent icon={<GraphIcon />} label="Event Graph" />
      </TabStrip>
      <GraphFrame><Graph /></GraphFrame>
      <TabStrip $gap={5}><DockTab icon={<ConsoleIcon />} label="Compiler Results" /></TabStrip>
      <ResultsFrame>
        <ResultLog>
          <Dot />
          [6908.27] Compile of PC_YourFirstHour successful! [in 214 ms] (/Game/FirstHourUMG/Blueprints/PC_YourFirstHour.PC_YourFirstHour)
        </ResultLog>
        <ClearButton>Clear</ClearButton>
      </ResultsFrame>
    </Column>
  );
}

function Player() {
  return (
    <>
      <CaptionLayer>
        <CaptionText>This will remove it from<br />wherever it's at currently.</CaptionText>
      </CaptionLayer>
      <BigPlay aria-label="Play video">
        <svg width="30" height="39" viewBox="0 0 30 39"><path d="M0 0l30 19.500L0 39z" fill="#eee" /></svg>
      </BigPlay>
      <PlayerBar>
        <Seek type="range" min={0} max={546} defaultValue={113} aria-label="Seek" />
        <Controls>
          <ControlButton $w={40} aria-label="Play">
            <svg width="12" height="14" viewBox="0 0 12 14"><path d="M0 0l12 7-12 7z" fill="#ccc" /></svg>
          </ControlButton>
          <ControlButton $w={36} aria-label="Volume">
            <svg width="16" height="14" viewBox="0 0 16 14">
              <path d="M0 4h3l5-4v14l-5-4H0z" fill="#ccc" />
              <path d="M10 4c1.500 2 1.500 4 0 6M12 1.500c3 3 3 8 0 11" fill="none" stroke="#ccc" strokeWidth="1.800" />
            </svg>
          </ControlButton>
          <Time><Now>1:53</Now><span>/ 9:06</span></Time>
          <RightControls>
            <button aria-label="Captions">
              <svg width="15" height="15" viewBox="0 0 15 15">
                <rect width="15" height="15" rx="6" fill="#ccc" />
                <path d="M6.800 6A2 2 0 1 0 6.800 9M12 6A2 2 0 1 0 12 9" fill="none" stroke="#222" strokeWidth="1.500" />
              </svg>
            </button>
            <SpeedButton>1x</SpeedButton>
            <button aria-label="Settings">
              <svg width="15" height="15" viewBox="0 0 16 16"><Gear x={8} y={8} r={8} c="#ccc" hole="#222" /></svg>
            </button>
            <button aria-label="Exit full screen">
              <svg width="15" height="15" viewBox="0 0 15 15">
                <path d="M8 7V1l2.200 2.200L13 .5 14.500 2l-2.700 2.800L14 7zM7 8v6l-2.200-2.200L2 14.500.5 13l2.700-2.800L1 8z" fill="#ccc" />
              </svg>
            </button>
            <button aria-label="Unreal Engine"><UELogo s={18} c="#ddd" /></button>
          </RightControls>
        </Controls>
      </PlayerBar>
    </>
  );
}

export default function App() {
  return (
    <Screen>
      <GlobalStyle />
      <TitleBar>
        <Logo><UELogo /></Logo>
        <DocTab><DocLabel>Map_FirstHourUMG</DocLabel></DocTab>
        <DocTab $active>
          <svg width="18" height="18" viewBox="0 0 18 18">
            <rect width="18" height="18" fill="#324778" />
            <path d="M3 1l3 1 3 2 3-2 4-1-3 4-3 1v4H8V6L5 5z" fill="#b6c2d6" />
            <circle cx="8" cy="14" r="2.500" fill="#fff" />
          </svg>
          <DocLabel>PC_YourFirstHour*</DocLabel>
          <CloseButton aria-label="Close document"><Cross c="#444" /></CloseButton>
        </DocTab>
        <WindowControls>
          <CapHolder>
            <svg width="17" height="18" viewBox="0 0 17 18">
              <path d="M5 8l4 7 6-4V7z" fill="#6e92c6" /><path d="M2 6l7-5 7 5-7 5z" fill="#a9cbf2" />
              <path d="M2 6v10" stroke="#d6b06a" strokeWidth="1.500" />
            </svg>
          </CapHolder>
          <WindowButton $w={26} aria-label="Minimize">
            <svg width="11" height="10" viewBox="0 0 11 10"><path d="M0 6h11v3H0z" fill="#fff" /></svg>
          </WindowButton>
          <WindowButton $w={23} aria-label="Restore">
            <svg width="11" height="11" viewBox="0 0 11 11" fill="none" stroke="#fff">
              <path d="M3 1h7v7" strokeWidth="1.500" /><rect x="1.500" y="3.500" width="5.500" height="6" strokeWidth="2.200" />
            </svg>
          </WindowButton>
          <WindowButton $w={41} aria-label="Close">
            <svg width="11" height="10" viewBox="0 0 11 10"><path d="M1 0l9 10M10 0L1 10" stroke="#fff" strokeWidth="2.800" /></svg>
          </WindowButton>
        </WindowControls>
      </TitleBar>
      <MenuBar>
        {["File", "Edit", "Asset", "View", "Debug", "Window", "Help"].map((m) => <MenuButton key={m}>{m}</MenuButton>)}
        <ParentClass>Parent class: <ParentLink href="#">Player Controller</ParentLink></ParentClass>
      </MenuBar>
      <Workspace>
        <LeftColumn />
        <CenterColumn />
        <Column>
          <TabStrip><DockTab icon={<InfoLens />} label="Details" /></TabStrip>
          <Frame />
        </Column>
      </Workspace>
      <Player />
    </Screen>
  );
}
